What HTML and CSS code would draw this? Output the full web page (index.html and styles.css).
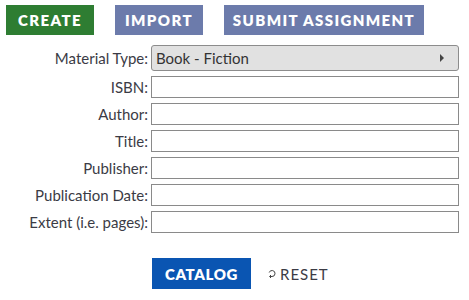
FILE: index.html
```html
<!DOCTYPE html>
<html lang="en">
<head>
    <meta charset="UTF-8">
    <title>Catalog Record</title>
    <link rel="stylesheet" href="styles.css">
</head>
<body>
    <div class="toolbar">
        <button class="btn btn-create">CREATE</button>
        <button class="btn btn-alt">IMPORT</button>
        <button class="btn btn-alt">SUBMIT ASSIGNMENT</button>
    </div>

    <form class="record-form">
        <label>Material Type:</label>
        <div class="select-box">
            <span>Book - Fiction</span>
            <span class="arrow"></span>
        </div>

        <label>ISBN:</label>
        <input type="text">

        <label>Author:</label>
        <input type="text">

        <label>Title:</label>
        <input type="text">

        <label>Publisher:</label>
        <input type="text">

        <label>Publication Date:</label>
        <input type="text">

        <label>Extent (i.e. pages):</label>
        <input type="text">
    </form>

    <div class="actions">
        <button class="btn btn-catalog">CATALOG</button>
        <button class="reset-link">
            <svg class="reset-icon" width="9" height="9" viewBox="0 0 9 9">
                <path d="M3 7.5 H5 A3 3 0 1 0 2.2 3.5" fill="none" stroke="#444" stroke-width="1"/>
                <path d="M4 6 L2.5 7.5 L4 9" fill="none" stroke="#444" stroke-width="1"/>
            </svg>
            RESET
        </button>
    </div>
</body>
</html>
```

FILE: styles.css
```css
* {
    margin: 0;
    padding: 0;
    box-sizing: border-box;
}

body {
    font-family: Lato, 'Open Sans', sans-serif;
    background: #fff;
    color: #333;
    width: 469px;
}

.toolbar {
    display: flex;
    gap: 21px;
    padding: 5px 6px 0;
}

.btn {
    height: 30px;
    border: none;
    color: #fff;
    font-family: Lato, sans-serif;
    font-weight: 800;
    font-size: 15px;
    letter-spacing: 1.4px;
    padding: 0;
    cursor: pointer;
}

.btn-create {
    background: #2e7d32;
    width: 88px;
}

.btn-alt {
    background: #6c7bab;
}

.toolbar .btn-alt:nth-child(2) {
    width: 88px;
}

.toolbar .btn-alt:nth-child(3) {
    width: 200px;
}

.record-form {
    display: grid;
    grid-template-columns: 148px 308px;
    column-gap: 3px;
    row-gap: 5px;
    margin-top: 10px;
    align-items: center;
}

.record-form label {
    text-align: right;
    font-size: 15px;
    color: #3b3b45;
}

.select-box {
    height: 26px;
    background: #e1e1e1;
    border: 1px solid #8c8c8c;
    border-radius: 3px;
    display: flex;
    align-items: center;
    justify-content: space-between;
    padding: 0 14px 0 4px;
    font-size: 15px;
    color: #333;
}

.arrow {
    width: 0;
    height: 0;
    border-top: 4px solid transparent;
    border-bottom: 4px solid transparent;
    border-left: 4px solid #444;
}

.record-form input {
    height: 22px;
    border: 1px solid #8a8a8a;
    background: #fff;
    font-size: 14px;
    outline: none;
}

.actions {
    display: flex;
    align-items: center;
    gap: 16px;
    padding-left: 152px;
    margin-top: 25px;
}

.btn-catalog {
    background: #0a55b2;
    width: 99px;
    height: 31px;
    letter-spacing: 0.6px;
}

.reset-link {
    border: none;
    background: none;
    font-family: Lato, sans-serif;
    font-size: 15px;
    letter-spacing: 1px;
    color: #3b3b45;
    display: flex;
    align-items: center;
    gap: 4px;
    cursor: pointer;
}
```
